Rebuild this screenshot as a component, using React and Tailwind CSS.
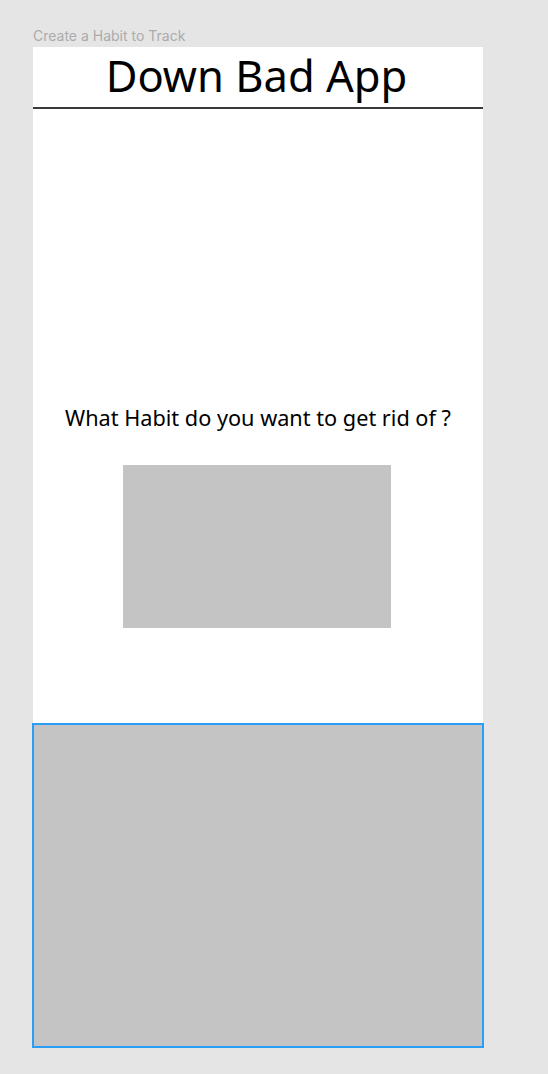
export default function App() {
  return (
    <div className="min-h-[1074px] w-[548px] bg-[#e5e5e5] pl-[33px] pt-[28px]" style={{ fontFamily: '"Noto Sans", sans-serif' }}>
      <div className="text-[14px] leading-[16px] text-[#ababab] mb-[3px]" style={{ fontFamily: 'Inter, sans-serif' }}>
        Create a Habit to Track
      </div>
      <div className="w-[450px] bg-white flex flex-col">
        <div className="h-[62px] border-b-2 border-[#3a3a3a] flex items-start justify-center">
          <h1 className="text-[43.5px] leading-[56px] text-black pr-[3px]">Down Bad App</h1>
        </div>
        <div className="h-[614px] flex flex-col items-center pt-[295px]">
          <p className="text-[21.7px] leading-[28px] text-black">What Habit do you want to get rid of ?</p>
          <div className="mt-[33px] w-[268px] h-[163px] bg-[#c4c4c4] -ml-[2px]" />
        </div>
        <div className="-ml-px w-[452px] h-[325px] bg-[#c4c4c4] border-2 border-[#2a9df4]" />
      </div>
    </div>
  );
}
